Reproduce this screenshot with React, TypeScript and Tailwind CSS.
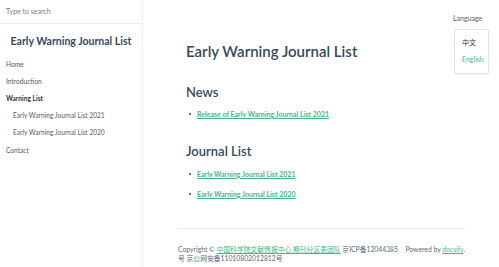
import React from "react";

const font = { fontFamily: '"Lato", "Noto Sans CJK SC", sans-serif' };

export default function App() {
  return (
    <div className="flex w-[499px] h-[267px] overflow-hidden bg-white text-[#34495e]" style={font}>
      <aside className="w-[143px] shrink-0 border-r border-[#eee] flex flex-col">
        <div className="h-[24px] border-b border-[#eee] flex items-center px-[6px]">
          <span className="text-[7px] text-[#7a7a7a]">Type to search</span>
        </div>
        <div className="mt-[9px] text-center text-[10.5px] leading-[16px] font-bold text-[#34495e]">Early Warning Journal List</div>
        <ul className="mt-[7px] text-[6.6px] text-[#505d6b] flex flex-col">
          <li className="h-[17px] flex items-center px-[6px]">Home</li>
          <li className="h-[17px] flex items-center px-[6px]">Introduction</li>
          <li className="h-[17px] flex items-center px-[6px] font-bold text-[#333]">Warning List</li>
          <li className="h-[17px] flex items-center pl-[13px]">Early Warning Journal List 2021</li>
          <li className="h-[17.5px] flex items-center pl-[13px]">Early Warning Journal List 2020</li>
          <li className="h-[18px] flex items-center px-[6px]">Contact</li>
        </ul>
      </aside>
      <main className="relative flex-1 flex flex-col">
        <div className="ml-[35px] w-[287px] flex flex-col">
          <div className="pl-[8px] pt-[41px]">
            <h1 className="text-[15px] font-semibold leading-[20px]">Early Warning Journal List</h1>
            <h2 className="mt-[22px] text-[13px] font-semibold leading-[18px]">News</h2>
            <ul className="mt-[7px] text-[7px] font-bold">
              <li className="flex items-center h-[12px] gap-[6px] pl-[3px]">
                <span className="w-[2px] h-[2px] bg-[#34495e] rounded-full" />
                <span className="text-[#42b983] underline">Release of Early Warning Journal List 2021</span>
              </li>
            </ul>
            <h2 className="mt-[22px] text-[13px] font-semibold leading-[18px]">Journal List</h2>
            <ul className="mt-[8px] text-[7px] font-bold flex flex-col gap-[8px]">
              <li className="flex items-center h-[12px] gap-[6px] pl-[3px]">
                <span className="w-[2px] h-[2px] bg-[#34495e] rounded-full" />
                <span className="text-[#42b983] underline">Early Warning Journal List 2021</span>
              </li>
              <li className="flex items-center h-[12px] gap-[6px] pl-[3px]">
                <span className="w-[2px] h-[2px] bg-[#34495e] rounded-full" />
                <span className="text-[#42b983] underline">Early Warning Journal List 2020</span>
              </li>
            </ul>
          </div>
          <div className="mt-[28px] border-t border-[#eee]" />
          <p className="mt-[16px] text-[6.8px] leading-[9px] text-[#5a6a7a]">
            <span className="float-right ml-[4px]">
              Powered by <span className="text-[#42b983] underline">docsify</span>.
            </span>
            Copyright © <span className="text-[#42b983] underline">中国科学院文献情报中心 期刊分区表团队</span> 京ICP备12044385
            <br />
            号 京公网安备11010802012812号
          </p>
        </div>
        <div className="absolute right-[10px] top-[13px] flex flex-col items-start">
          <span className="text-[7px] text-[#505d6b]">Language</span>
          <div className="mt-[5px] ml-[1px] w-[35px] h-[45px] border border-[#e5e5e5] rounded-[2px] shadow-[0_1px_2px_rgba(0,0,0,0.05)] flex flex-col pl-[7px] pt-[7px] gap-[7px] text-[7px]">
            <span className="text-[#333]">中文</span>
            <span className="text-[#42b983]">English</span>
          </div>
        </div>
      </main>
    </div>
  );
}
